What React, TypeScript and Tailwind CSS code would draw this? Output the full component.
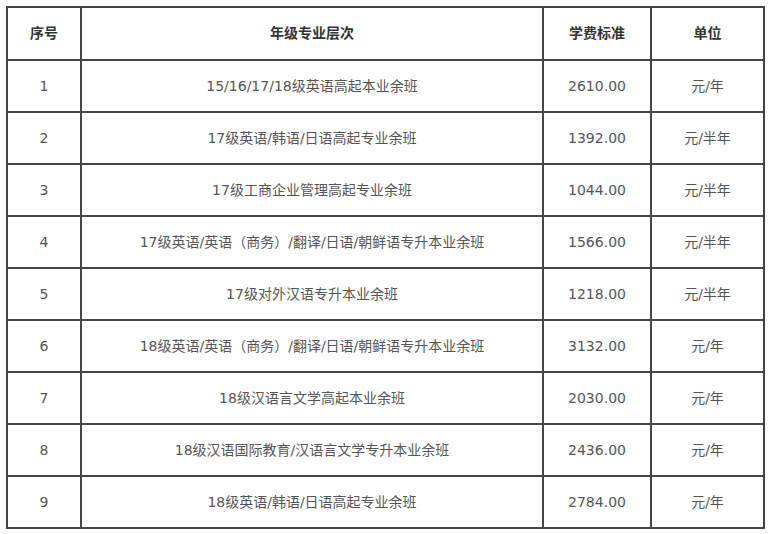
import React from 'react';

const rows = [
  ['1', '15/16/17/18级英语高起本业余班', '2610.00', '元/年'],
  ['2', '17级英语/韩语/日语高起专业余班', '1392.00', '元/半年'],
  ['3', '17级工商企业管理高起专业余班', '1044.00', '元/半年'],
  ['4', '17级英语/英语（商务）/翻译/日语/朝鲜语专升本业余班', '1566.00', '元/半年'],
  ['5', '17级对外汉语专升本业余班', '1218.00', '元/半年'],
  ['6', '18级英语/英语（商务）/翻译/日语/朝鲜语专升本业余班', '3132.00', '元/年'],
  ['7', '18级汉语言文学高起本业余班', '2030.00', '元/年'],
  ['8', '18级汉语国际教育/汉语言文学专升本业余班', '2436.00', '元/年'],
  ['9', '18级英语/韩语/日语高起专业余班', '2784.00', '元/年'],
];

const cell = 'border-2 border-[#444] text-center align-middle p-0';

const App = () => {
  return (
    <div className="w-[770px] h-[534px] bg-white pl-[6px] pt-[6px]" style={{fontFamily: '"DejaVu Sans", "Noto Sans CJK SC", sans-serif'}}>
      <table className="border-collapse text-[14px] text-[#555] table-fixed w-[757px]">
        <colgroup>
          <col className="w-[74px]" />
          <col className="w-[462px]" />
          <col className="w-[108px]" />
          <col className="w-[113px]" />
        </colgroup>
        <thead>
          <tr className="h-[53px] font-bold text-[#333]">
            <th className={cell}>序号</th>
            <th className={cell}>年级专业层次</th>
            <th className={cell}>学费标准</th>
            <th className={cell}>单位</th>
          </tr>
        </thead>
        <tbody>
          {rows.map((r) => (
            <tr key={r[0]} className="h-[52px]">
              {r.map((c, i) => (
                <td key={i} className={cell}>{c}</td>
              ))}
            </tr>
          ))}
        </tbody>
      </table>
    </div>
  );
};

export default App;
